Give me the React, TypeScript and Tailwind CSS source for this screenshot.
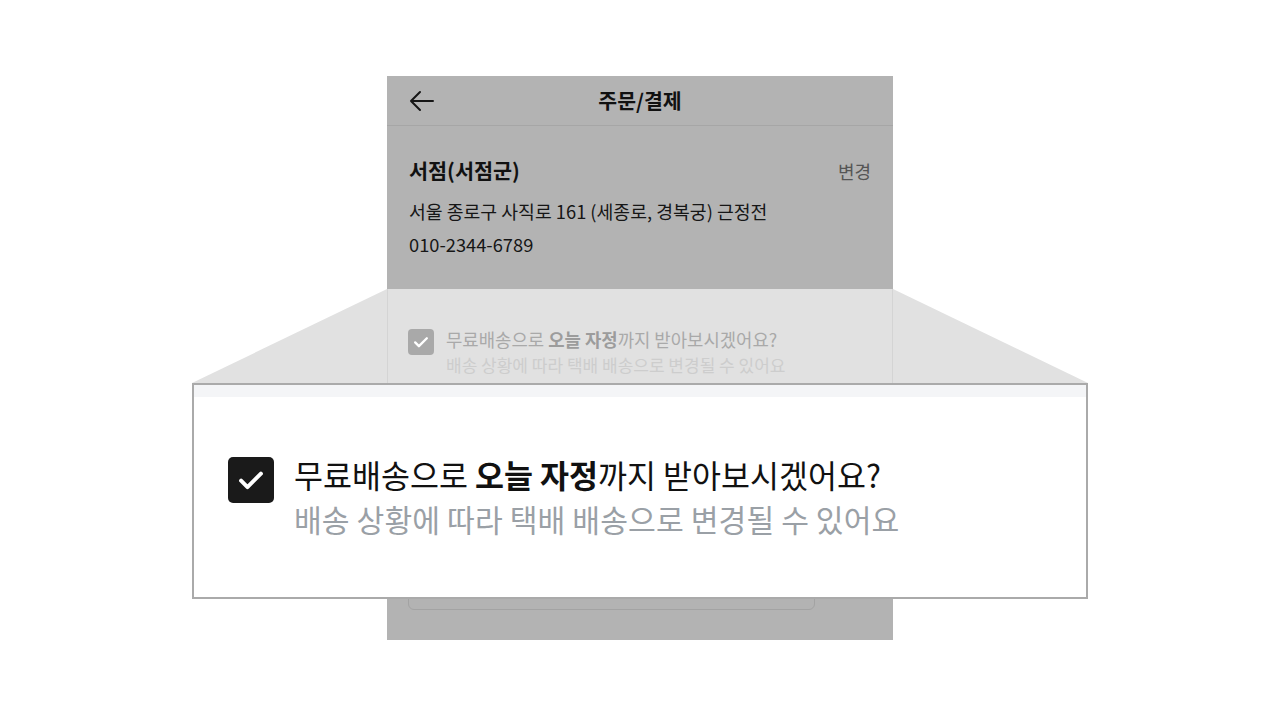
import React from "react";

const font = { fontFamily: '"Noto Sans CJK KR", "Noto Sans", sans-serif' };

function Check({ className }: { className?: string }) {
  return (
    <svg viewBox="0 0 24 24" className={className} fill="none">
      <path d="M5 12.5l4.5 4.5L19 7.5" stroke="white" strokeWidth="2.8" strokeLinecap="round" strokeLinejoin="round" />
    </svg>
  );
}

export default function App() {
  return (
    <div className="relative w-full h-[723px] bg-white overflow-hidden" style={font}>
      {/* trapezoid connector */}
      <svg className="absolute left-0 top-0 w-[1280px] h-[723px]" viewBox="0 0 1280 723">
        <polygon points="387,289 893,289 1088,383 192,383" fill="#e1e1e1" />
      </svg>

      {/* phone mock */}
      <div className="relative z-10 flex justify-center pt-[76px]">
        <div className="w-[506px] flex flex-col">
          <div className="h-[50px] bg-[#b3b3b3] border-b border-[#a6a6a6] flex items-center px-[22px] relative">
            <svg viewBox="0 0 26 22" className="w-[26px] h-[22px]" fill="none">
              <path d="M2 11h22M11 2L2 11l9 9" stroke="#161616" strokeWidth="2" strokeLinecap="round" strokeLinejoin="round" />
            </svg>
            <div className="flex-1 text-center text-[20.5px] font-bold text-[#111] pr-[26px] leading-none">주문/결제</div>
          </div>
          <div className="h-[163px] bg-[#b3b3b3] px-[22px] pt-[31px]">
            <div className="flex items-center justify-between h-[28px]">
              <span className="text-[20.7px] font-bold text-[#111]">서점(서점군)</span>
              <span className="text-[18px] text-[#555]">변경</span>
            </div>
            <div className="mt-[10px] text-[18.3px] leading-[33px] text-[#161616]">
              <div>서울 종로구 사직로 161 (세종로, 경복궁) 근정전</div>
              <div>010-2344-6789</div>
            </div>
          </div>
          <div className="h-[111px] bg-[#e1e1e1] border-x border-[#d4d4d4] px-[20px] pt-[40px] flex items-start gap-[12px]">
            <div className="w-[26px] h-[26px] rounded-[4px] bg-[#a9a9a9] flex items-center justify-center shrink-0">
              <Check className="w-[20px] h-[20px]" />
            </div>
            <div className="-mt-[2px]">
              <div className="text-[17.8px] leading-[25px] text-[#a9a9a9]">
                무료배송으로 <b className="text-[#9c9c9c]">오늘 자정</b>까지 받아보시겠어요?
              </div>
              <div className="text-[17px] leading-[25px] text-[#cdcdcd]">배송 상황에 따라 택배 배송으로 변경될 수 있어요</div>
            </div>
          </div>
          <div className="h-[240px] bg-[#b3b3b3] px-[21px] pt-[150px]">
            <div className="w-[407px] h-[60px] rounded-[6px] border border-[#a3a3a3]"></div>
          </div>
        </div>
      </div>

      {/* zoom panel */}
      <div className="absolute z-20 left-[192px] top-[383px] w-[896px] h-[216px] bg-white border-2 border-[#aaaaaa] flex flex-col">
        <div className="h-[12px] bg-[#f4f5f7]"></div>
        <div className="flex items-start pl-[34px] pt-[60px] gap-[20px]">
          <div className="w-[46px] h-[46px] rounded-[5px] bg-[#1a1a1a] flex items-center justify-center shrink-0">
            <Check className="w-[34px] h-[34px]" />
          </div>
          <div className="-mt-[5px]">
            <div className="text-[31.5px] leading-[45px] text-[#111]">
              무료배송으로 <b>오늘 자정</b>까지 받아보시겠어요?
            </div>
            <div className="text-[30.2px] leading-[45px] text-[#9aa0a6] tracking-[0.1px]">배송 상황에 따라 택배 배송으로 변경될 수 있어요</div>
          </div>
        </div>
      </div>
    </div>
  );
}
